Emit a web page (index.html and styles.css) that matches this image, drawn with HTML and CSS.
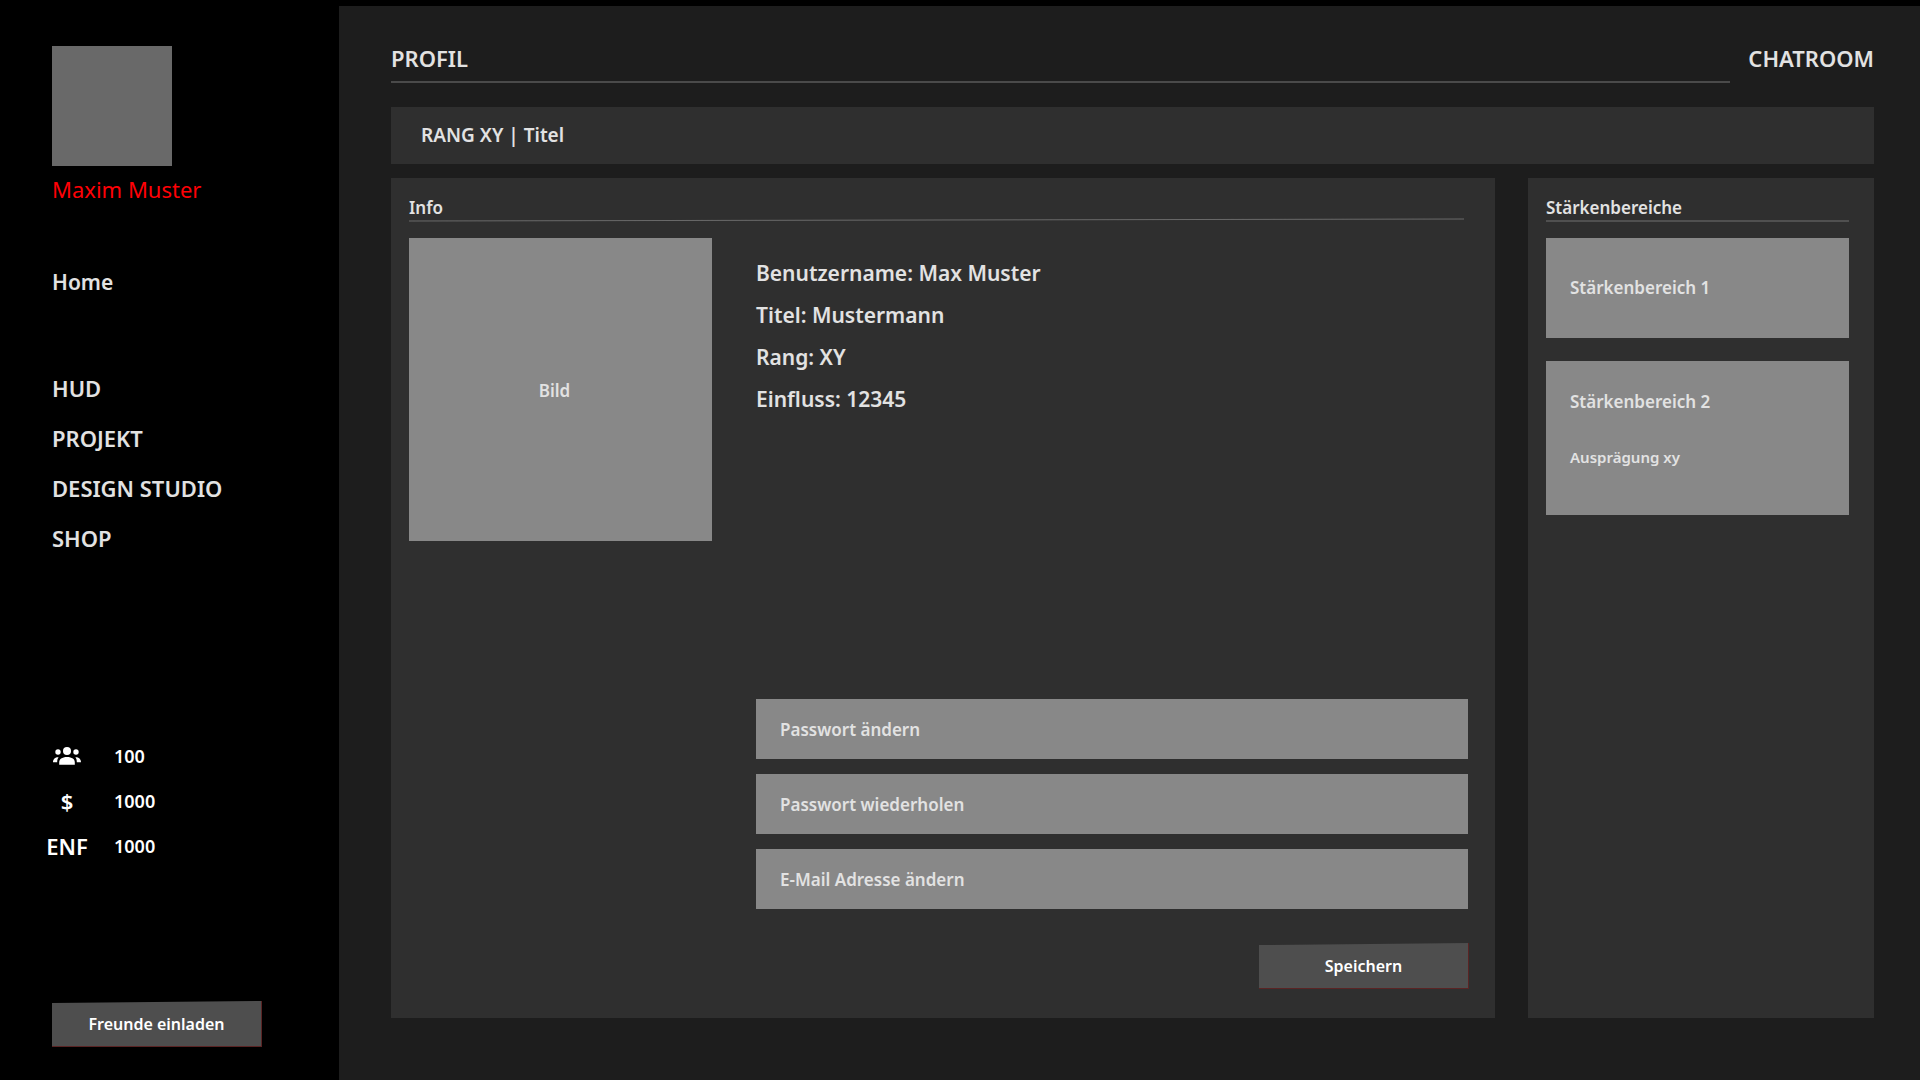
FILE: index.html
```html
<!DOCTYPE html>
<html lang="de">
<head>
<meta charset="utf-8">
<meta name="viewport" content="width=device-width, initial-scale=1">
<title>Profil</title>
<link rel="stylesheet" href="styles.css">
</head>
<body>
<div class="app">
  <aside class="sidebar">
    <div class="avatar"></div>
    <p class="user-name">Maxim Muster</p>
    <nav class="nav">
      <a class="nav-link nav-home" href="#">Home</a>
      <a class="nav-link" href="#">HUD</a>
      <a class="nav-link" href="#">PROJEKT</a>
      <a class="nav-link" href="#">DESIGN STUDIO</a>
      <a class="nav-link" href="#">SHOP</a>
    </nav>
    <dl class="stats">
      <dt>
        <svg class="people-icon" viewBox="0 0 28 18" role="img" aria-label="Freunde">
          <circle cx="14" cy="4" r="4"/>
          <circle cx="5" cy="5" r="2.7"/>
          <circle cx="23" cy="5" r="2.7"/>
          <path d="M6.200 17.700v-2.200c0-1.600.6-3 1.900-3.900C9.500 10.500 11.600 10 14 10s4.500.5 5.900 1.600c1.300.9 1.900 2.300 1.900 3.900v2.200z"/>
          <path d="M5.600 10.200C2.200 9.800 0 12 0 15.300h4.200c0-2.100.2-3.600 1.400-5.100zM22.400 10.200c3.400-.4 5.600 1.800 5.600 5.100h-4.200c0-2.100-.2-3.600-1.400-5.100z"/>
        </svg>
      </dt>
      <dd>100</dd>
      <dt>$</dt>
      <dd>1000</dd>
      <dt>ENF</dt>
      <dd>1000</dd>
    </dl>
    <button class="button" type="button">Freunde einladen</button>
  </aside>

  <main class="main">
    <header class="top">
      <h1 class="page-title">PROFIL</h1>
      <a class="chat-link" href="#">CHATROOM</a>
    </header>
    <div class="rank-bar">RANG XY | Titel</div>
    <div class="columns">
      <section class="panel info">
        <h2 class="panel-title">Info</h2>
        <svg class="slanted-rule" viewBox="0 0 100 4" preserveAspectRatio="none" aria-hidden="true">
          <line x1="0" y1="3" x2="100" y2="1" vector-effect="non-scaling-stroke"/>
        </svg>
        <div class="info-body">
          <div class="picture">Bild</div>
          <div class="details">
            <ul class="facts">
              <li>Benutzername: Max Muster</li>
              <li>Titel: Mustermann</li>
              <li>Rang: XY</li>
              <li>Einfluss: 12345</li>
            </ul>
            <form class="form">
              <input class="field" type="password" placeholder="Passwort ändern" aria-label="Passwort ändern">
              <input class="field" type="password" placeholder="Passwort wiederholen" aria-label="Passwort wiederholen">
              <input class="field" type="email" placeholder="E-Mail Adresse ändern" aria-label="E-Mail Adresse ändern">
              <button class="button save" type="button">Speichern</button>
            </form>
          </div>
        </div>
      </section>
      <section class="panel strengths">
        <h2 class="panel-title ruled">Stärkenbereiche</h2>
        <article class="card">
          <h3 class="card-title">Stärkenbereich 1</h3>
        </article>
        <article class="card">
          <h3 class="card-title">Stärkenbereich 2</h3>
          <p class="card-text">Ausprägung xy</p>
        </article>
      </section>
    </div>
  </main>
</div>
</body>
</html>
```
FILE: styles.css
```css
* {
  box-sizing: border-box;
}

body,
h1,
h2,
h3,
p,
ul,
dl,
dd {
  margin: 0;
  padding: 0;
}

body {
  background: #000;
  color: #e2e2e2;
  font: 600 22px/30px "Noto Sans", sans-serif;
}

a {
  color: inherit;
  text-decoration: none;
}

h1,
h2,
h3 {
  font-size: inherit;
  font-weight: inherit;
}

.app {
  display: flex;
  min-height: 100vh;
}

/* Sidebar */
.sidebar {
  display: flex;
  flex: none;
  flex-direction: column;
  align-items: flex-start;
  width: 339px;
  padding: 46px 40px 33px 52px;
}

.avatar {
  width: 120px;
  height: 120px;
  background: #696969;
}

.user-name {
  margin-top: 8px;
  color: #ff0006;
  font-weight: 400;
}

.nav {
  display: flex;
  flex-direction: column;
  gap: 20px;
  margin-top: 63px;
}

.nav-home {
  margin-bottom: 56px;
  font-size: 21px;
}

.stats {
  display: grid;
  grid-template-columns: 46px auto;
  column-gap: 24px;
  row-gap: 15px;
  align-items: center;
  margin-top: 188px;
  margin-left: -8px;
  color: #fff;
}

.stats dt {
  display: flex;
  justify-content: center;
}

.stats dd {
  font-size: 18px;
}

.people-icon {
  width: 28px;
  height: 18px;
  fill: #fff;
}

.button {
  width: 210px;
  height: 46px;
  padding: 0;
  border: solid #5a2424;
  border-width: 0 1px 1px 0;
  background: #4e4e4e;
  color: #fff;
  font: 600 16px/24px "Noto Sans", sans-serif;
  clip-path: polygon(0 2px, 100% 0, 100% 100%, 0 100%);
}

.sidebar .button {
  margin-top: auto;
}

/* Main area */
.main {
  display: flex;
  flex: 1;
  flex-direction: column;
  min-width: 0;
  margin-top: 6px;
  padding: 37px 46px 62px 52px;
  background: #1d1d1d;
}

.top {
  display: flex;
  gap: 18px;
}

.page-title {
  flex: 1;
  height: 40px;
  border-bottom: 2px solid #4a4a4a;
}

.rank-bar {
  margin-top: 24px;
  padding: 14px 30px;
  background: #2f2f2f;
  font-size: 19px;
  line-height: 29px;
}

.columns {
  display: flex;
  flex: 1;
  gap: 33px;
  margin-top: 14px;
}

.panel {
  display: flex;
  flex-direction: column;
  background: #2f2f2f;
}

.panel-title {
  font-size: 17px;
  line-height: 24px;
}

.info {
  flex: 1;
  padding: 18px 27px 29px 18px;
}

.slanted-rule {
  width: calc(100% - 4px);
  height: 4px;
  margin-top: -2px;
  stroke: #6a6a6a;
  stroke-width: 1px;
}

.info-body {
  display: flex;
  flex: 1;
  gap: 44px;
  margin-top: 16px;
}

.picture {
  display: flex;
  flex: none;
  align-items: center;
  justify-content: center;
  align-self: flex-start;
  width: 303px;
  height: 303px;
  padding: 2px 12px 0 0;
  background: #888;
  font-size: 17px;
}

.details {
  display: flex;
  flex: 1;
  flex-direction: column;
  justify-content: space-between;
}

.facts {
  display: flex;
  flex-direction: column;
  gap: 12px;
  padding-top: 20px;
  font-size: 21px;
  list-style: none;
}

.form {
  display: flex;
  flex-direction: column;
  gap: 15px;
}

.field {
  width: 100%;
  height: 60px;
  padding: 0 24px;
  border: 0;
  background: #888;
  color: #e2e2e2;
  font: 600 17px/24px "Noto Sans", sans-serif;
}

.field::placeholder {
  color: #e2e2e2;
  opacity: 1;
}

.save {
  align-self: flex-end;
  margin-top: 19px;
  margin-right: -1px;
}

.strengths {
  flex: none;
  width: 346px;
  padding: 18px 25px 18px 18px;
}

.ruled {
  border-bottom: 2px solid #505050;
}

.card {
  margin-top: 16px;
  padding: 38px 24px;
  background: #888;
}

.card + .card {
  margin-top: 23px;
  padding: 29px 24px 46px;
}

.card-title {
  font-size: 17px;
  line-height: 24px;
}

.card-text {
  margin-top: 31px;
  font-size: 15px;
  line-height: 24px;
}
```
